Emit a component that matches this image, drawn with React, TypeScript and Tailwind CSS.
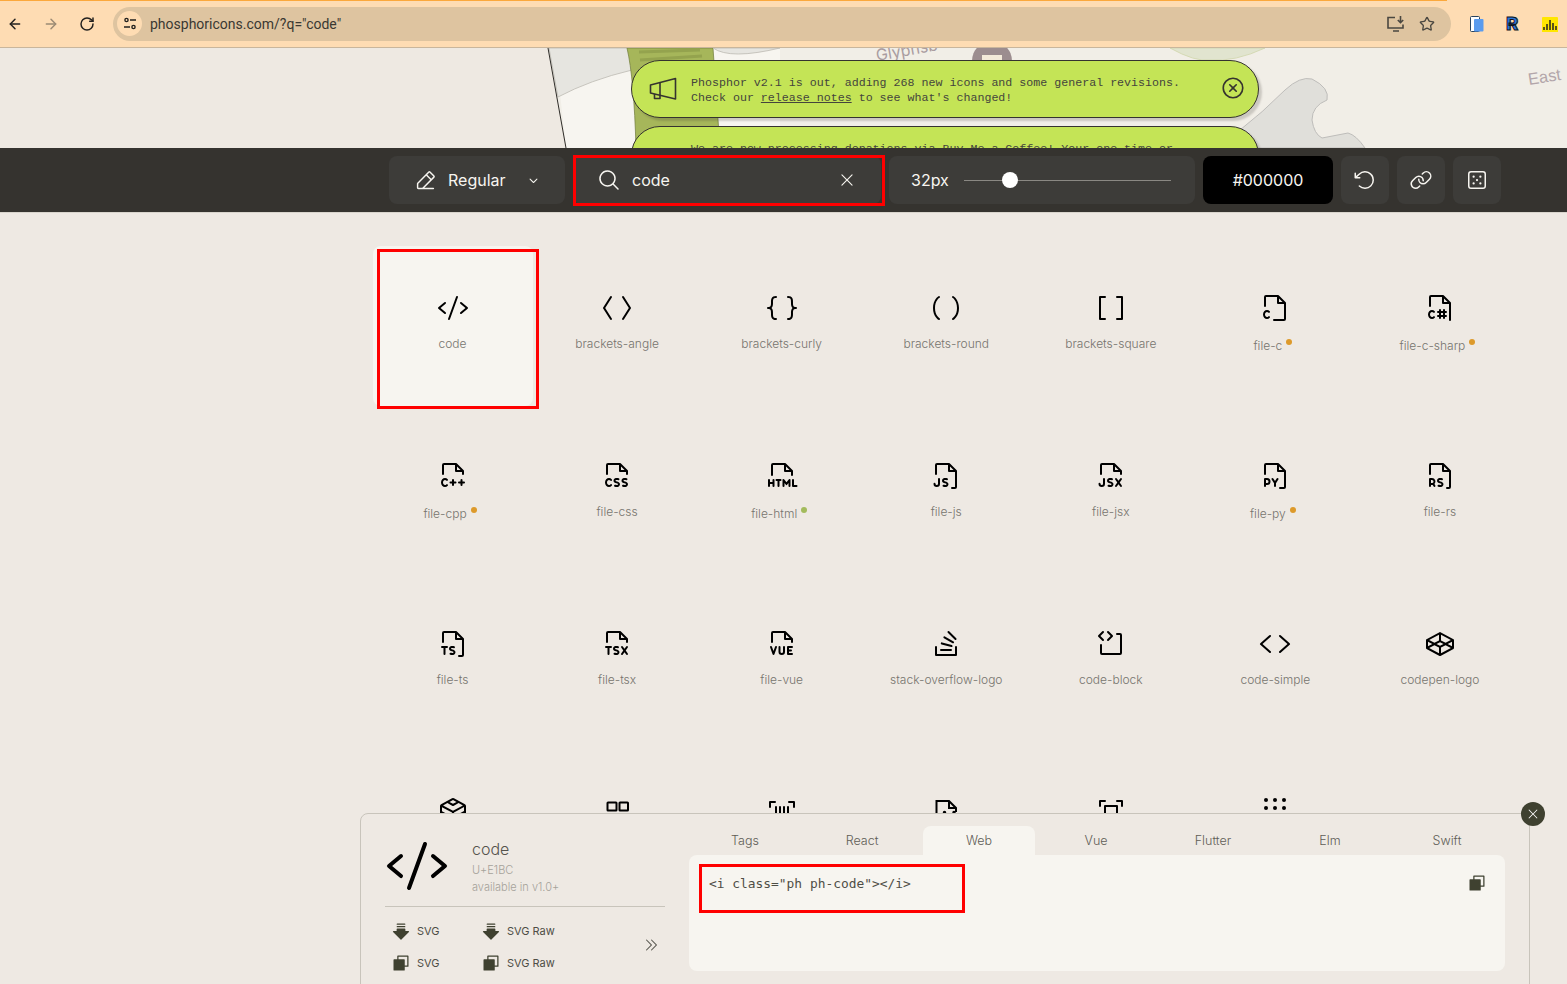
import { ArrowLeft, ArrowRight, RotateCw, Star } from 'lucide-react';
import type { SVGProps } from 'react';
import type { IconType } from 'react-icons';
import {
  PiArrowCounterClockwise,
  PiArrowFatLinesDownFill,
  PiBarcode,
  PiBracketsAngle,
  PiBracketsCurly,
  PiBracketsRound,
  PiBracketsSquare,
  PiCaretDoubleRight,
  PiCaretDownBold,
  PiCode,
  PiCodeBlock,
  PiCodeSimple,
  PiCodepenLogo,
  PiCodesandboxLogo,
  PiCopyFill,
  PiDiceFive,
  PiFileC,
  PiFileCSharp,
  PiFileCpp,
  PiFileCss,
  PiFileHtml,
  PiFileJs,
  PiFileJsx,
  PiFilePy,
  PiFileRs,
  PiFileTs,
  PiFileTsx,
  PiFileVue,
  PiLink,
  PiMagnifyingGlass,
  PiPencilSimpleLine,
  PiScan,
  PiStackOverflowLogo,
  PiX,
  PiXCircle,
} from 'react-icons/pi';

// the cut-off fourth row, only the top of each glyph shows
function QrTopIcon(props: SVGProps<SVGSVGElement>) {
  return (
    <svg viewBox="0 0 256 256" fill="none" stroke="currentColor" strokeWidth="16" {...props}>
      <rect x="52" y="52" width="72" height="64" rx="4" />
      <rect x="148" y="52" width="68" height="64" rx="4" />
    </svg>
  );
}

function FileDotsIcon(props: SVGProps<SVGSVGElement>) {
  return (
    <svg viewBox="0 0 256 256" fill="none" stroke="currentColor" strokeWidth="16" {...props}>
      <path d="M52 136V40h100l56 56v32M152 40v56h56" />
      <circle cx="116" cy="132" r="6" fill="currentColor" />
      <circle cx="192" cy="132" r="6" fill="currentColor" />
    </svg>
  );
}

function DotsIcon(props: SVGProps<SVGSVGElement>) {
  return (
    <svg viewBox="0 0 256 256" fill="currentColor" {...props}>
      {[56, 128, 200].map((x) =>
        [32, 96, 160].map((y) => <circle key={`${x}-${y}`} cx={x} cy={y} r="16" />),
      )}
    </svg>
  );
}

type Item = { name: string; icon: IconType; dot?: 'orange' | 'green' };

const items: Item[] = [
  { name: 'code', icon: PiCode },
  { name: 'brackets-angle', icon: PiBracketsAngle },
  { name: 'brackets-curly', icon: PiBracketsCurly },
  { name: 'brackets-round', icon: PiBracketsRound },
  { name: 'brackets-square', icon: PiBracketsSquare },
  { name: 'file-c', icon: PiFileC, dot: 'orange' },
  { name: 'file-c-sharp', icon: PiFileCSharp, dot: 'orange' },
  { name: 'file-cpp', icon: PiFileCpp, dot: 'orange' },
  { name: 'file-css', icon: PiFileCss },
  { name: 'file-html', icon: PiFileHtml, dot: 'green' },
  { name: 'file-js', icon: PiFileJs },
  { name: 'file-jsx', icon: PiFileJsx },
  { name: 'file-py', icon: PiFilePy, dot: 'orange' },
  { name: 'file-rs', icon: PiFileRs },
  { name: 'file-ts', icon: PiFileTs },
  { name: 'file-tsx', icon: PiFileTsx },
  { name: 'file-vue', icon: PiFileVue },
  { name: 'stack-overflow-logo', icon: PiStackOverflowLogo },
  { name: 'code-block', icon: PiCodeBlock },
  { name: 'code-simple', icon: PiCodeSimple },
  { name: 'codepen-logo', icon: PiCodepenLogo },
  { name: 'codesandbox-logo', icon: PiCodesandboxLogo },
  { name: 'qr-code', icon: QrTopIcon as IconType },
  { name: 'barcode', icon: PiBarcode },
  { name: 'file-dotted', icon: FileDotsIcon as IconType },
  { name: 'scan', icon: PiScan },
  { name: 'dots-nine', icon: DotsIcon as IconType },
];

const tabs = ['Tags', 'React', 'Web', 'Vue', 'Flutter', 'Elm', 'Swift'];

function BrowserBar() {
  return (
    <div className="relative flex h-12 items-center border-b border-[#c9b69c] bg-[#fedcb3] font-['Roboto',sans-serif]">
      <div className="absolute top-0 left-0 h-[1px] w-[1447px] bg-[#fba83c]" />
      <div className="flex w-[113px] items-center gap-5 pl-[7px] text-[#22211f]">
        <ArrowLeft className="size-4" strokeWidth={2.2} />
        <ArrowRight className="size-4 text-[#9b8a74]" strokeWidth={2.2} />
        <RotateCw className="size-4" strokeWidth={2.2} />
      </div>
      <div className="flex h-[34px] w-[1338px] items-center rounded-full bg-[#dec4a0] pl-1">
        <span className="flex size-[25px] items-center justify-center rounded-full bg-[#fedcb3]">
          <svg viewBox="0 0 16 16" className="size-4 text-[#22211f]" fill="none" stroke="currentColor" strokeWidth="1.4">
            <circle cx="4.5" cy="4" r="1.6" />
            <path d="M8 4h6M2 11h6" />
            <circle cx="11.5" cy="11" r="1.6" />
          </svg>
        </span>
        <span className="mt-[1px] ml-2 text-[14px] text-[#3a3832]">phosphoricons.com/?q="code"</span>
        <svg viewBox="0 0 20 18" className="mr-[13px] ml-auto h-[18px] w-5 text-[#4a4740]" fill="none" stroke="currentColor" strokeWidth="1.6">
          <path d="M9 2.5H2v10.5h15V9.5M7 16h6" />
          <path d="M14.5 1v6.5M11.8 5l2.7 2.7L17.2 5" />
        </svg>
        <Star className="mr-[16px] size-4 text-[#4a4740]" strokeWidth={2} />
      </div>
      <div className="ml-[19px] flex items-center gap-[22px]">
        <svg viewBox="0 0 14 16" className="h-4 w-[14px]">
          <rect x="0.5" y="0.5" width="9" height="15" rx="1" fill="#fff" stroke="#28435f" />
          <rect x="4" y="3" width="9.5" height="12.5" rx="1" fill="#5a9bee" />
        </svg>
        <span className="w-[14px] text-[19px] leading-none font-black text-[#2a74d8] [-webkit-text-stroke:1px_#10131a]">R</span>
        <svg viewBox="0 0 16 16" className="size-4">
          <rect width="16" height="16" y="1" fill="#ffe600" rx="1" />
          <path d="M2 11v3M5 8v6M8 4v10M11 7v7M14 10v4" stroke="#222" strokeWidth="1.5" />
        </svg>
      </div>
    </div>
  );
}

function Banner({ children }: { children: React.ReactNode }) {
  return (
    <div className="flex h-[58px] items-start rounded-full border border-[#35332f] bg-[#c4e456] pr-[12px] pl-[59px] font-['Liberation_Mono',monospace] text-[11.65px] leading-[15px] text-[#45443d] shadow-[3px_3px_2px_rgba(53,51,47,0.2)]">
      {children}
    </div>
  );
}

function MapHeader() {
  return (
    <div className="relative h-[100px] overflow-hidden bg-[#eee9e2]">
      <svg viewBox="0 0 1567 100" className="h-[100px] w-[1567px]">
        <path d="M548 0 L566 100 L1567 100 L1567 0 Z" fill="#f1eee7" />
        <path d="M555 0 L780 0 L780 100 L566 100 Z" fill="#f7f5f0" />
        <path d="M549 0 L558 49 Q590 32 632 22 L648 0 Z" fill="#e6e5e0" stroke="#bdbab2" strokeWidth="0.8" />
        <path d="M548 0 L566 100" stroke="#2e2c28" strokeWidth="1" />
        <path d="M627 0 Q634 30 636 100 L720 100 L713 0 Z" fill="#a6b65a" stroke="#6f7a3a" strokeWidth="0.7" />
        <path d="M639 4 L700 2 M640 12 L702 8" stroke="#94a34e" strokeWidth="3" />
        <path d="M713 0 Q730 12 780 0 Z" fill="#e6e5e0" stroke="#bdbab2" strokeWidth="0.8" />
        <path d="M1170 0 Q1195 14 1210 12 Q1235 14 1265 0 Z" fill="#e1e4cf" stroke="#cfd5ab" strokeWidth="0.8" />
        <path
          d="M1240 82 Q1262 65 1285 42 Q1300 28 1312 31 Q1330 40 1327 52 Q1312 58 1312 72 Q1314 86 1322 90 L1348 85 Q1356 87 1365 100 L1230 100 Z"
          fill="#e0dfda"
          stroke="#b9b8b6"
          strokeWidth="0.9"
        />
        <circle cx="992" cy="13" r="20" fill="#9c8d8f" />
        <rect x="982" y="7" width="20" height="12" fill="#f3ead9" />
        <text x="877" y="13" transform="rotate(-10 877 13)" fontSize="16" fontFamily="Inter, sans-serif" fill="#a99ca0">
          Glyphsb
        </text>
        <text x="1529" y="37" transform="rotate(-9 1529 37)" fontSize="16.5" fontFamily="Liberation Sans, sans-serif" fill="#b3a6aa">
          East
        </text>
      </svg>
      <div className="absolute top-3 left-[631px] flex w-[628px] flex-col gap-2">
        <Banner>
          <svg viewBox="0 0 28 24" className="mt-[16px] -ml-[42px] mr-[14px] h-6 w-7 shrink-0 text-[#35332f]" fill="none" stroke="currentColor" strokeWidth="1.6" strokeLinejoin="round">
            <path d="M1.5 8 L26.5 1.5 V22 L1.5 16 Z" />
            <path d="M11 5.5 V18.5" />
            <path d="M5.5 17 V21.5 H11 V18.5" />
          </svg>
          <div className="mt-[14px] flex-1">
            <p>Phosphor v2.1 is out, adding 268 new icons and some general revisions.</p>
            <p>
              Check our <span className="underline">release notes</span> to see what's changed!
            </p>
          </div>
          <PiXCircle className="mt-[14px] size-[26px] text-[#35332f]" />
        </Banner>
        <Banner>
          <p className="mt-[14px]">We are now processing donations via Buy Me a Coffee! Your one-time or</p>
        </Banner>
      </div>
    </div>
  );
}

function Toolbar() {
  return (
    <div className="flex h-[65px] gap-2 border-b border-[#d9d5cd] bg-[#35332f] pt-2 pl-[389px] text-base text-[#f7f5f0]">
      <div className="flex h-12 w-[176px] items-center rounded-lg bg-[#3d3c39] pl-[25px]">
        <PiPencilSimpleLine className="mr-[11px] size-[23px]" />
        <span>Regular</span>
        <PiCaretDownBold className="ml-[22px] size-[11px]" />
      </div>
      <div className="flex h-12 w-[308px] items-center rounded-lg bg-[#3d3c39] pl-[24px]">
        <PiMagnifyingGlass className="mr-[11px] size-6" />
        <span>code</span>
        <PiX className="mr-[25px] ml-auto size-[18px]" />
      </div>
      <div className="flex h-12 w-[306px] items-center rounded-lg bg-[#3d3c39] pl-[22px]">
        <span className="w-[53px]">32px</span>
        <div className="relative h-[1px] w-[207px] bg-[#8a8883]">
          <span className="absolute -top-2 left-[38px] size-4 rounded-full bg-white" />
        </div>
      </div>
      <div className="flex h-12 w-[130px] items-center justify-center rounded-lg bg-black">#000000</div>
      {[PiArrowCounterClockwise, PiLink, PiDiceFive].map((Icon, index) => (
        <div key={index} className="flex size-12 items-center justify-center rounded-lg bg-[#3d3c39]">
          <Icon className="size-6" />
        </div>
      ))}
    </div>
  );
}

function IconCell({ item, active }: { item: Item; active: boolean }) {
  const Icon = item.icon;
  return (
    <div className={`flex h-40 flex-col items-center pt-[46px] ${active ? 'rounded-lg bg-[#f7f5f0]' : ''}`}>
      <Icon className="size-8 text-black" />
      {item.dot ? (
        <div className="mt-[11px] mr-[5px] flex items-start gap-[4px] text-[12px] leading-[18px] font-light text-[#76746e]">
          <span className="mt-[2px]">{item.name}</span>
          <span className={`mt-[4px] size-[6px] rounded-full ${item.dot === 'orange' ? 'bg-[#dd9a2b]' : 'bg-[#a3bb5c]'}`} />
        </div>
      ) : (
        <span className="mt-[11px] text-[12px] leading-[18px] font-light text-[#76746e]">{item.name}</span>
      )}
    </div>
  );
}

function DownloadAction({ icon: Icon, label, width }: { icon: IconType; label: string; width: string }) {
  return (
    <div className={`flex items-center gap-[6px] text-[11px] text-[#4f4e46] ${width}`}>
      <Icon className="size-5 text-[#3f4130]" />
      <span>{label}</span>
    </div>
  );
}

function DetailPanel() {
  return (
    <div className="absolute top-[813px] left-[360px] flex h-[200px] w-[1170px] rounded-lg border border-[#c8c4bb] bg-[#eee9e3]">
      <div className="w-[328px] pt-[19px] pl-6">
        <div className="flex w-[280px] items-start gap-[23px] border-b border-[#c8c4bb] pb-[8px]">
          <PiCode className="mt-[1px] size-16 text-black" />
          <div className="font-light">
            <p className="mt-[4px] text-base leading-6 text-[#55534d]">code</p>
            <p className="mt-[1px] text-[11px] leading-[17px] text-[#a5a29a]">U+E1BC</p>
            <p className="text-[11px] leading-[17px] text-[#a5a29a]">available in v1.0+</p>
          </div>
        </div>
        <div className="relative mt-[14px] flex flex-col gap-[12px] pl-[6px]">
          <div className="flex">
            <DownloadAction icon={PiArrowFatLinesDownFill} label="SVG" width="w-[90px]" />
            <DownloadAction icon={PiArrowFatLinesDownFill} label="SVG Raw" width="w-[100px]" />
          </div>
          <div className="flex">
            <DownloadAction icon={PiCopyFill} label="SVG" width="w-[90px]" />
            <DownloadAction icon={PiCopyFill} label="SVG Raw" width="w-[100px]" />
          </div>
          <PiCaretDoubleRight className="absolute top-[16px] left-[258px] size-4 text-[#4f4e46]" />
        </div>
      </div>
      <div className="w-[816px] pt-3">
        <div className="-ml-[2.5px] grid h-[29px] w-[819px] grid-cols-7 text-center text-[12.5px] leading-[29px] font-light text-[#5f5d56]">
          {tabs.map((tab) => (
            <div key={tab} className={tab === 'Web' ? 'mx-[2.5px] rounded-t-lg bg-[#f7f5f0]' : ''}>
              {tab}
            </div>
          ))}
        </div>
        <div className="flex h-[116px] items-start justify-between rounded-lg bg-[#f7f5f0] pt-[21px] pr-[18px] pl-5 font-['DejaVu_Sans_Mono',monospace] text-[12.9px] leading-4 text-[#4f4e46]">
          <span>{'<i class="ph ph-code"></i>'}</span>
          <PiCopyFill className="-mt-[3px] size-5 text-[#3f4130]" />
        </div>
      </div>
    </div>
  );
}

export default function App() {
  return (
    <div className="relative h-[984px] w-[1567px] overflow-hidden bg-[#eee9e3] font-['Inter',sans-serif]">
      <BrowserBar />
      <MapHeader />
      <Toolbar />
      <div className="mt-[33px] ml-[372.5px] grid w-[1147.5px] grid-cols-7 gap-x-[4.5px] gap-y-2">
        {items.map((item) => (
          <IconCell key={item.name} item={item} active={item.name === 'code'} />
        ))}
      </div>
      <DetailPanel />
      <div className="absolute top-[802px] left-[1521px] flex size-6 items-center justify-center rounded-full bg-[#3f4130] text-white">
        <PiX className="size-[14px]" />
      </div>
      {/* red annotation boxes */}
      <div className="absolute top-[155px] left-[573px] h-[51px] w-[312px] border-[3px] border-[#ff0000]" />
      <div className="absolute top-[249px] left-[377px] h-40 w-[162px] border-[3px] border-[#ff0000]" />
      <div className="absolute top-[864px] left-[699px] h-[49px] w-[266px] border-[3px] border-[#ff0000]" />
    </div>
  );
}
